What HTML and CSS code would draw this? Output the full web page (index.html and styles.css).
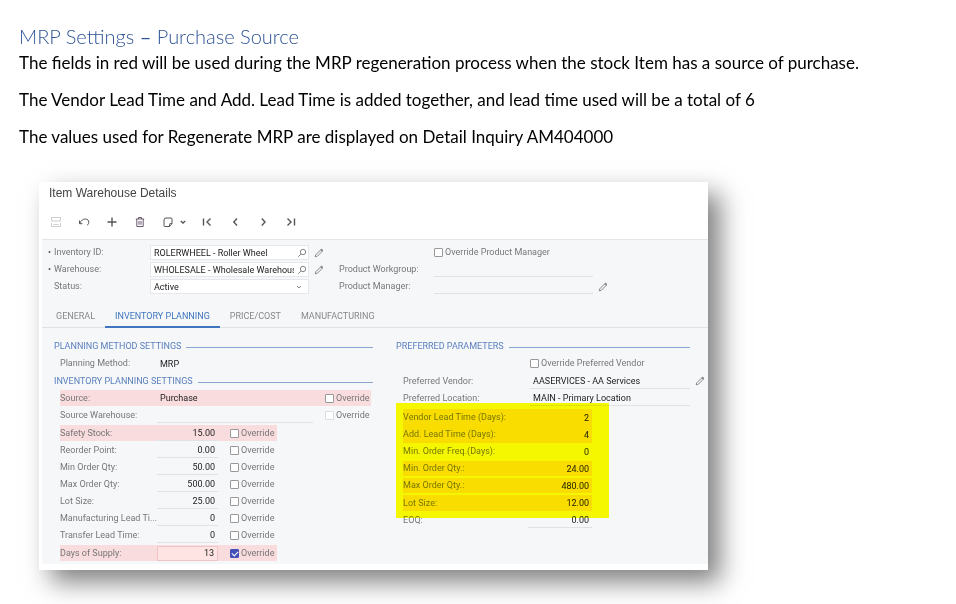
FILE: index.html
```
<!DOCTYPE html>
<html lang="en">
<head>
    <meta charset="UTF-8">
    <meta name="viewport" content="width=device-width, initial-scale=1.0">
    <title>MRP Settings – Purchase Source</title>
    <link rel="stylesheet" href="styles.css">
</head>
<body>
    <svg class="sprite" aria-hidden="true">
        <symbol id="pencil" viewBox="0 0 10 10">
            <path d="M1.200 8.800l.6-2L6.500 2.100 8 3.600 3.300 8.300z" />
            <path class="tip" d="M6.800 1.800l.8-.8L9 2.400l-.8.8z" />
        </symbol>
        <symbol id="search" viewBox="0 0 10 10">
            <circle cx="6" cy="4" r="2.700" />
            <path d="M4 6L1.200 8.800" />
        </symbol>
    </svg>

    <main class="page">
        <h1>MRP Settings <b>–</b> Purchase Source</h1>
        <p>The fields in red will be used during the MRP regeneration process when the stock Item has a source of purchase.</p>
        <p>The Vendor Lead Time and Add. Lead Time is added together, and lead time used will be a total of 6</p>
        <p>The values used for Regenerate MRP are displayed on Detail Inquiry AM404000</p>

        <section class="panel">
            <h2 class="panel-title">Item Warehouse Details</h2>

            <div class="toolbar">
                <button class="faded" aria-label="Save"><svg viewBox="0 0 12 12"><path d="M1.500 1.500h9v3.500h-9zM1.500 7v3.500h9V7M3.500 8.500h5" /></svg></button>
                <button aria-label="Undo"><svg viewBox="0 0 12 12"><path d="M1.500 4.500v3.200h3M1.800 7.500C3 4.500 5 3 7.300 3c2.400 0 3.500 1.600 3.500 3.300 0 1.300-.8 2.400-1.800 3" /></svg></button>
                <button aria-label="Add"><svg class="bold" viewBox="0 0 12 12"><path d="M6 1.500v9M1.500 6h9" /></svg></button>
                <button class="delete" aria-label="Delete"><svg viewBox="0 0 12 12"><path d="M1.800 3h8.400M4.500 3V1.500h3V3M2.800 3v7.500h6.400V3M5 5v3.800M7 5v3.800" /></svg></button>
                <button aria-label="Copy"><svg viewBox="0 0 12 12"><path d="M4 2h5q1 0 1 1v4.500L7.500 10.500H3q-1 0-1-1V4q0-2 2-2zM10 7.500H8.500q-1 0-1 1v2" /></svg></button>
                <button class="caret" aria-label="Copy options"><svg class="bold" viewBox="0 0 12 12"><path d="M3.800 5L6 7l2.200-2" /></svg></button>
                <button aria-label="First"><svg class="bold" viewBox="0 0 12 12"><path d="M2.500 2.500v7M9.500 2.500L6 6l3.500 3.500" /></svg></button>
                <button aria-label="Previous"><svg class="bold" viewBox="0 0 12 12"><path d="M8 2.500L4.800 6 8 9.500" /></svg></button>
                <button aria-label="Next"><svg class="bold" viewBox="0 0 12 12"><path d="M4.800 2.500L8 6 4.800 9.500" /></svg></button>
                <button aria-label="Last"><svg class="bold" viewBox="0 0 12 12"><path d="M2.500 2.500L6 6 2.500 9.500M9.500 2.500v7" /></svg></button>
            </div>

            <div class="panel-body">
                <div class="summary">
                    <label class="required" for="inventory">Inventory ID:</label>
                    <div class="box"><input id="inventory" value="ROLERWHEEL - Roller Wheel"><svg class="icon"><use href="#search" /></svg></div>
                    <svg class="icon edit"><use href="#pencil" /></svg>
                    <label class="check start-5"><input type="checkbox">Override Product Manager</label>

                    <label class="required" for="warehouse">Warehouse:</label>
                    <div class="box"><input id="warehouse" value="WHOLESALE - Wholesale Warehouse"><svg class="icon"><use href="#search" /></svg></div>
                    <svg class="icon edit"><use href="#pencil" /></svg>
                    <label for="workgroup">Product Workgroup:</label>
                    <input class="line" id="workgroup">

                    <label class="start-1" for="status">Status:</label>
                    <div class="box select">
                        <select id="status"><option>Active</option></select>
                        <svg class="icon" viewBox="0 0 10 10"><path d="M3 4l2 2 2-2" /></svg>
                    </div>
                    <label class="start-4" for="manager">Product Manager:</label>
                    <input class="line" id="manager">
                    <svg class="icon edit"><use href="#pencil" /></svg>
                </div>

                <nav class="tabs">
                    <a href="#general">GENERAL</a>
                    <a class="active" href="#planning">INVENTORY PLANNING</a>
                    <a href="#price">PRICE/COST</a>
                    <a href="#manufacturing">MANUFACTURING</a>
                </nav>

                <div class="columns">
                    <div>
                        <h3>PLANNING METHOD SETTINGS</h3>
                        <div class="row wide">
                            <label for="method">Planning Method:</label>
                            <input id="method" value="MRP">
                        </div>
                        <h3 class="tight">INVENTORY PLANNING SETTINGS</h3>
                        <div class="row wide tall red">
                            <label for="source">Source:</label>
                            <input id="source" value="Purchase">
                            <label class="check"><input type="checkbox">Override</label>
                        </div>
                        <div class="row wide">
                            <label for="source-wh">Source Warehouse:</label>
                            <input class="line" id="source-wh">
                            <label class="check"><input type="checkbox" disabled>Override</label>
                        </div>
                        <div class="row tall red">
                            <label for="safety">Safety Stock:</label>
                            <input class="line number" id="safety" value="15.00">
                            <label class="check"><input type="checkbox">Override</label>
                        </div>
                        <div class="row">
                            <label for="reorder">Reorder Point:</label>
                            <input class="line number" id="reorder" value="0.00">
                            <label class="check"><input type="checkbox">Override</label>
                        </div>
                        <div class="row">
                            <label for="min-qty">Min Order Qty:</label>
                            <input class="line number" id="min-qty" value="50.00">
                            <label class="check"><input type="checkbox">Override</label>
                        </div>
                        <div class="row">
                            <label for="max-qty">Max Order Qty:</label>
                            <input class="line number" id="max-qty" value="500.00">
                            <label class="check"><input type="checkbox">Override</label>
                        </div>
                        <div class="row">
                            <label for="lot">Lot Size:</label>
                            <input class="line number" id="lot" value="25.00">
                            <label class="check"><input type="checkbox">Override</label>
                        </div>
                        <div class="row">
                            <label for="mfg-lead">Manufacturing Lead Ti...</label>
                            <input class="line number" id="mfg-lead" value="0">
                            <label class="check"><input type="checkbox">Override</label>
                        </div>
                        <div class="row">
                            <label for="transfer">Transfer Lead Time:</label>
                            <input class="line number" id="transfer" value="0">
                            <label class="check"><input type="checkbox">Override</label>
                        </div>
                        <div class="row tall red">
                            <label for="supply">Days of Supply:</label>
                            <input class="line number editable" id="supply" value="13">
                            <label class="check"><input type="checkbox" checked>Override</label>
                        </div>
                    </div>

                    <div>
                        <h3>PREFERRED PARAMETERS</h3>
                        <div class="param">
                            <label class="check start-2"><input type="checkbox">Override Preferred Vendor</label>
                        </div>
                        <div class="param tall">
                            <label for="vendor">Preferred Vendor:</label>
                            <input class="line" id="vendor" value="AASERVICES - AA Services">
                            <svg class="icon edit"><use href="#pencil" /></svg>
                        </div>
                        <div class="param">
                            <label for="location">Preferred Location:</label>
                            <input class="line" id="location" value="MAIN - Primary Location">
                        </div>
                        <div class="marker">
                            <div class="amount tinted joined">
                                <label for="vendor-lead">Vendor Lead Time (Days):</label>
                                <input class="number" id="vendor-lead" value="2">
                            </div>
                            <div class="amount tinted joined">
                                <label for="add-lead">Add. Lead Time (Days):</label>
                                <input class="number" id="add-lead" value="4">
                            </div>
                            <div class="amount">
                                <label for="order-freq">Min. Order Freq.(Days):</label>
                                <input class="number" id="order-freq" value="0">
                            </div>
                            <div class="amount tinted">
                                <label for="p-min">Min. Order Qty.:</label>
                                <input class="number" id="p-min" value="24.00">
                            </div>
                            <div class="amount tinted">
                                <label for="p-max">Max Order Qty.:</label>
                                <input class="number" id="p-max" value="480.00">
                            </div>
                            <div class="amount tinted tall">
                                <label for="p-lot">Lot Size:</label>
                                <input class="number" id="p-lot" value="12.00">
                            </div>
                        </div>
                        <div class="amount">
                            <label for="eoq">EOQ:</label>
                            <input class="line number" id="eoq" value="0.00">
                        </div>
                    </div>
                </div>
            </div>
        </section>
    </main>
</body>
</html>
```

FILE: styles.css
```
* {
    box-sizing: border-box;
}

body {
    margin: 0;
    background: #fff;
    color: #000;
    font-family: Lato, sans-serif;
}

.sprite {
    position: absolute;
    width: 0;
    height: 0;
}

.page {
    min-height: 100vh;
    padding: 22px 19px 32px;
}

h1 {
    margin: 0;
    font-size: 20px;
    font-weight: 300;
    line-height: 28px;
    color: #2f5496;
}

h1 b {
    font-weight: 400;
}

p {
    margin: 0 0 11px;
    font-size: 17px;
    line-height: 26px;
}

/* screen panel */

.panel {
    width: 70vw;
    min-width: 560px;
    margin: 32px 0 0 20px;
    padding: 0 0 6px 3px;
    background: #fff;
    box-shadow: 12px 12px 24px rgba(0, 0, 0, 0.5);
    font-family: Roboto, Arial, sans-serif;
    font-size: 9px;
    color: #777;
}

.panel-title {
    margin: 0;
    padding-left: 7px;
    font-family: "Liberation Sans", Arial, sans-serif;
    font-size: 12px;
    font-weight: 400;
    line-height: 22px;
    color: #444;
}

svg {
    fill: none;
    stroke: currentColor;
}

.toolbar {
    display: flex;
    align-items: center;
    height: 35px;
}

.toolbar button {
    display: flex;
    justify-content: center;
    width: 28px;
    padding: 0;
    border: none;
    background: none;
    color: #555;
}

.toolbar svg {
    width: 12px;
    height: 12px;
}

.toolbar .bold {
    stroke-width: 1.4;
}

.toolbar .faded {
    color: #ccc;
}

.toolbar .delete {
    color: #6b5a70;
}

.toolbar .caret {
    width: 12px;
    margin-right: 4px;
    margin-left: -5px;
}

.panel-body {
    padding-bottom: 2px;
    border-top: 1px solid #e4e5e8;
    background: #f5f7f9;
}

.summary {
    display: grid;
    grid-template-columns: 102px minmax(0, 159fr) 30px 95px minmax(0, 159fr) minmax(0, 115fr);
    grid-auto-rows: 17px;
    align-items: center;
    padding: 4px 0 12px 6px;
}

.required::before {
    content: "•";
    display: inline-block;
    width: 6px;
    color: #555;
}

.start-1 {
    grid-column: 1;
    padding-left: 6px;
}

.start-2 {
    grid-column: 2;
}

.start-4 {
    grid-column: 4;
}

.start-5 {
    grid-column: 5 / 7;
}

label {
    overflow: hidden;
    white-space: nowrap;
    line-height: 15px;
}

input,
select {
    width: 100%;
    min-width: 0;
    height: 15px;
    padding: 0 3px;
    border: none;
    border-radius: 0;
    background: none;
    font: inherit;
    color: #222;
}

select {
    appearance: none;
}

.line {
    border-bottom: 1px solid #e0e2e5;
}

.box {
    display: flex;
    align-items: center;
    height: 15px;
    padding-right: 1px;
    border: 1px solid #e6e7ea;
    background: #fff;
}

.icon {
    flex: none;
    width: 10px;
    height: 10px;
    color: #888;
}

.tip {
    fill: currentColor;
}

.select .icon {
    margin-right: 3px;
}

.edit {
    margin-left: 5px;
}

.check {
    display: flex;
    align-items: center;
    gap: 2px;
}

.check input {
    appearance: none;
    flex: none;
    width: 9px;
    height: 9px;
    margin: 0;
    padding: 0;
    border: 1px solid #999;
    border-radius: 1px;
    background: #fff;
}

.check input:checked {
    position: relative;
    border-color: #4350b8;
    background: #4350b8;
}

.check input:checked::after {
    content: "";
    position: absolute;
    top: 0;
    left: 2px;
    width: 3px;
    height: 5px;
    border: solid #fff;
    border-width: 0 1px 1px 0;
    transform: rotate(45deg);
}

.check input:disabled {
    border-color: #ddd;
}

/* tabs */

.tabs {
    display: flex;
    padding-left: 4px;
    border-bottom: 1px solid #e0e2e6;
}

.tabs a {
    padding: 0 10px;
    margin-bottom: -1px;
    border-bottom: 2px solid transparent;
    color: #888;
    line-height: 19px;
    text-decoration: none;
}

.tabs .active {
    border-color: #3f76bd;
    color: #3f76bd;
}

/* tab content */

.columns {
    display: grid;
    grid-template-columns: minmax(0, 319fr) minmax(0, 294fr);
    column-gap: 23px;
    padding: 9px 18px 0 12px;
}

h3 {
    display: flex;
    align-items: center;
    gap: 5px;
    height: 18px;
    margin: 0;
    font-size: 9px;
    font-weight: 400;
    white-space: nowrap;
    color: #5a7fbd;
}

h3::after {
    content: "";
    flex: 1;
    height: 1px;
    margin-top: 3px;
    background: #8aa6d0;
}

.tight {
    height: 17px;
}

.row {
    display: grid;
    grid-template-columns: 97px 61px 47px;
    align-items: center;
    width: fit-content;
    height: 17px;
    margin-left: 6px;
    padding-right: 12px;
}

.row .check {
    margin-right: -12px;
    margin-left: 12px;
}

.wide {
    grid-template-columns: 97px minmax(0, 1fr) 46px;
    width: auto;
    margin-right: 2px;
}

.red {
    border: solid transparent;
    border-width: 1px 0;
    background: #f9dcdd padding-box;
}

.number {
    text-align: right;
}

.editable {
    border: 1px solid #f0c4c6;
    background: #ffe4e4;
}

.param {
    display: grid;
    grid-template-columns: 127px minmax(0, 1fr) 0;
    align-items: center;
    height: 17px;
    margin-left: 7px;
}

/* highlighter stroke laid over the order settings */

.marker {
    position: relative;
    width: fit-content;
    margin-top: 2px;
}

.marker::after {
    content: "";
    position: absolute;
    inset: -6px -17px -6px 0;
    background: #ff0;
    mix-blend-mode: multiply;
    pointer-events: none;
}

.amount {
    display: grid;
    grid-template-columns: 125px 64px;
    align-items: center;
    width: fit-content;
    height: 17px;
    margin-left: 7px;
}

.tinted {
    border: solid transparent;
    border-width: 1px 0;
    background: #f9dcdd padding-box;
}

.joined {
    border: none;
}

.tall {
    height: 18px;
}
```
